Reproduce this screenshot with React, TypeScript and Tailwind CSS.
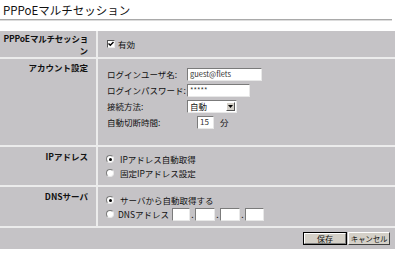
import React from 'react';

const sunken =
  'bg-white border border-t-[#7b7b7b] border-l-[#7b7b7b] border-r-[#e8e8e8] border-b-[#e8e8e8]';

function TextBox({ width, value, className = '' }: { width: string; value?: string; className?: string }) {
  return (
    <div className={`${sunken} ${width} h-[13px] flex items-center pl-[2px] text-[7.5px] leading-none text-[#333] ${className}`}>
      {value}
    </div>
  );
}

function Radio({ checked }: { checked?: boolean }) {
  return (
    <span className="w-[8px] h-[8px] rounded-full bg-white border border-t-[#7b7b7b] border-l-[#7b7b7b] border-r-[#e8e8e8] border-b-[#e8e8e8] flex items-center justify-center shrink-0">
      {checked && <span className="w-[3px] h-[3px] rounded-full bg-black" />}
    </span>
  );
}

function Checkbox() {
  return (
    <span className="w-[8px] h-[8px] bg-white border border-t-[#555] border-l-[#555] border-r-[#e8e8e8] border-b-[#e8e8e8] flex items-center justify-center shrink-0">
      <svg width="6" height="6" viewBox="0 0 6 6">
        <path d="M0.5 2.5 L2.3 4.3 L5.5 1" stroke="#000" strokeWidth="1.4" fill="none" />
      </svg>
    </span>
  );
}

function Label({ children, className = '' }: { children: React.ReactNode; className?: string }) {
  return (
    <div className={`w-[96px] shrink-0 bg-[#c5c3c6] pr-[8px] text-right font-bold text-[8.5px] leading-[9px] ${className}`}>
      {children}
    </div>
  );
}

function Field({ label, children }: { label: string; children: React.ReactNode }) {
  return (
    <div className="flex items-center h-[16px]">
      <span className="w-[80px] shrink-0 whitespace-nowrap">{label}</span>
      {children}
    </div>
  );
}

function RadioLine({ checked, children }: { checked?: boolean; children: React.ReactNode }) {
  return (
    <div className="flex items-center h-[14px] gap-[6px]">
      <Radio checked={checked} />
      {children}
    </div>
  );
}

export default function App() {
  return (
    <div className="w-[400px] h-[259px] bg-white text-[#111] font-['Noto_Sans_CJK_JP',sans-serif] overflow-hidden">
      <div className="h-[19px] pl-[3px] pt-[3px] text-[11.5px] leading-[14px]">PPPoEマルチセッション</div>
      <div className="w-[392px] h-[2px] bg-[#a9a9a9] border-b border-[#dcdcdc]" />

      <div className="mt-[10px] w-[395px] flex flex-col gap-[2px] bg-[#ececec] text-[8.5px] leading-[9px]">
        {/* 有効 */}
        <div className="flex gap-[2px] h-[26px]">
          <Label className="flex flex-col justify-center items-end leading-[12px]">
            <span className="whitespace-nowrap tracking-[-0.2px]">PPPoEマルチセッショ</span>
            <span>ン</span>
          </Label>
          <div className="flex-1 bg-[#c5c3c6] flex items-center pl-[9px] gap-[3px]">
            <Checkbox />
            <span>有効</span>
          </div>
        </div>

        {/* アカウント設定 */}
        <div className="flex gap-[2px] h-[86px]">
          <Label className="pt-[4px]">アカウント設定</Label>
          <div className="flex-1 bg-[#c5c3c6] pl-[9px] pt-[7px] flex flex-col">
            <Field label="ログインユーザ名:">
              <TextBox width="w-[75px]" value="guest@flets" />
            </Field>
            <Field label="ログインパスワード:">
              <TextBox width="w-[63px]" value="*****" />
            </Field>
            <Field label="接続方法:">
              <div className={`${sunken} w-[50px] h-[13px] flex items-center justify-between pl-[2px] pr-[1px]`}>
                <span>自動</span>
                <span className="w-[9px] h-[9px] bg-[#d4d0c8] border border-t-white border-l-white border-r-[#555] border-b-[#555] flex items-center justify-center">
                  <svg width="5" height="3" viewBox="0 0 5 3">
                    <path d="M0 0 H5 L2.5 3 Z" fill="#000" />
                  </svg>
                </span>
              </div>
            </Field>
            <Field label="自動切断時間:">
              <TextBox width="w-[17px]" value="15" className="ml-[10px] text-[8px]" />
              <span className="ml-[6px]">分</span>
            </Field>
          </div>
        </div>

        {/* IPアドレス */}
        <div className="flex gap-[2px] h-[38px]">
          <Label className="pt-[5px]">IPアドレス</Label>
          <div className="flex-1 bg-[#c5c3c6] pl-[8px] pt-[5px] flex flex-col">
            <RadioLine checked>IPアドレス自動取得</RadioLine>
            <RadioLine>固定IPアドレス設定</RadioLine>
          </div>
        </div>

        {/* DNSサーバ */}
        <div className="flex gap-[2px] h-[39px]">
          <Label className="pt-[5px]">DNSサーバ</Label>
          <div className="flex-1 bg-[#c5c3c6] pl-[8px] pt-[6px] flex flex-col">
            <RadioLine checked>サーバから自動取得する</RadioLine>
            <div className="flex items-center h-[14px]">
              <Radio />
              <span className="ml-[4px] w-[54px] whitespace-nowrap">DNSアドレス</span>
              <TextBox width="w-[18px]" />
              <span className="w-[5px] text-center self-end pb-[2px]">.</span>
              <TextBox width="w-[20px]" />
              <span className="w-[5px] text-center self-end pb-[2px]">.</span>
              <TextBox width="w-[20px]" />
              <span className="w-[5px] text-center self-end pb-[2px]">.</span>
              <TextBox width="w-[19px]" />
            </div>
          </div>
        </div>

        {/* buttons */}
        <div className="h-[21px] bg-[#c5c3c6] flex items-center justify-end pr-[5px] gap-[1px]">
          <button className="w-[44px] h-[13px] border border-black bg-[#d4d0c8] flex p-0">
            <span className="flex-1 flex items-center justify-center border border-t-white border-l-white border-r-[#808080] border-b-[#808080] text-[8px] leading-none whitespace-nowrap">
              保存
            </span>
          </button>
          <button className="w-[42px] h-[13px] p-0 bg-[#d4d0c8] border border-t-white border-l-white border-r-[#404040] border-b-[#404040] flex items-center justify-center text-[7.5px] leading-none whitespace-nowrap tracking-[-0.2px]">
            キャンセル
          </button>
        </div>
      </div>
    </div>
  );
}
